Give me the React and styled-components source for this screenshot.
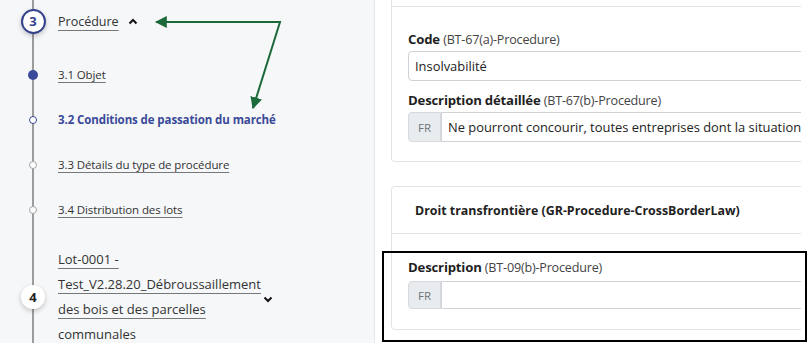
import React from 'react'
import styled, { createGlobalStyle } from 'styled-components'

const GlobalStyle = createGlobalStyle`
  html, body {
    margin: 0;
    padding: 0;
    background: #ffffff;
    font-family: "Open Sans", Lato, sans-serif;
    overflow: hidden;
  }
`

const Page = styled.div`
  display: flex;
  width: 807px;
  height: 343px;
  overflow: hidden;
  position: relative;
`

const Sidebar = styled.aside`
  position: relative;
  width: 374px;
  flex: none;
  background: #f6f7f9;
  border-right: 1px solid #e4e6ea;
`

const Timeline = styled.div`
  position: relative;
  display: flex;
  flex-direction: column;
  &::before {
    content: '';
    position: absolute;
    left: 32px;
    top: 0;
    bottom: -20px;
    width: 2px;
    background: #9c9c9c;
  }
`

const Row = styled.div`
  position: relative;
  display: grid;
  grid-template-columns: 58px 1fr;
  align-items: center;
  height: ${p => p.$h}px;
  margin-top: ${p => p.$mt || 0}px;
`

const Marker = styled.div`
  display: flex;
  justify-content: center;
  padding-left: 8px;
  width: 50px;
`

const StepCircle = styled.div`
  width: ${p => (p.$active ? 21 : 24)}px;
  height: ${p => (p.$active ? 21 : 24)}px;
  border-radius: 50%;
  background: #fff;
  border: ${p => (p.$active ? '2px solid #33428c' : 'none')};
  box-shadow: 0 2px 5px rgba(0, 0, 0, 0.22);
  display: flex;
  align-items: center;
  justify-content: center;
  font-size: 13px;
  font-weight: 700;
  color: ${p => (p.$active ? '#33428c' : '#222')};
`

const Dot = styled.div`
  width: ${p => (p.$filled ? 10 : 8)}px;
  height: ${p => (p.$filled ? 10 : 8)}px;
  border-radius: 50%;
  box-sizing: border-box;
  background: ${p => (p.$filled ? '#3a4a98' : '#fff')};
  border: ${p => (p.$filled ? 'none' : `1.5px solid ${p.$color}`)};
`

const StepLink = styled.span`
  display: inline-flex;
  align-items: center;
  gap: 9px;
  font-size: 12.5px;
  color: #333;
  span {
    text-decoration: underline;
    text-decoration-color: #777;
    text-underline-offset: 4px;
  }
`

const SubLink = styled.span`
  font-size: 11.5px;
  letter-spacing: -0.1px;
  color: ${p => (p.$current ? '#3a4a98' : '#333')};
  font-weight: ${p => (p.$current ? 700 : 400)};
  text-decoration: ${p => (p.$current ? 'none' : 'underline')};
  text-decoration-color: #777;
  text-underline-offset: 3px;
`

const LotBlock = styled.div`
  display: flex;
  align-items: center;
  gap: 1px;
`

const LotText = styled.span`
  width: 204px;
  font-size: 13px;
  line-height: 25px;
  color: #333;
  text-decoration: underline;
  text-decoration-color: #777;
  text-underline-offset: 4px;
`

const Arrow = styled.svg`
  position: absolute;
  left: 0;
  top: 0;
  pointer-events: none;
`

const Main = styled.main`
  flex: 1;
  padding-left: 16px;
  padding-right: 6px;
  overflow: hidden;
`

const Clip = styled.div`
  overflow: hidden;
`

const Card = styled.section`
  margin-right: -20px;
  margin-top: ${p => p.$mt || 0}px;
  border: 1px solid #e2e3e6;
  border-top: none;
  border-radius: 0 0 4px 4px;
  background: #fff;
  ${p => p.$top && 'border-top: 1px solid #e2e3e6; border-radius: 4px;'}
`

const CardCut = styled.div`
  height: 6px;
  border-bottom: 1px solid #e2e3e6;
`

const CardHeader = styled.div`
  height: 46px;
  display: flex;
  align-items: center;
  padding-left: 23px;
  border-bottom: 1px solid #e2e3e6;
  font-size: 12.4px;
  font-weight: 700;
  color: #222;
`

const CardBody = styled.div`
  padding: ${p => p.$pad};
  padding-left: 16px;
  display: flex;
  flex-direction: column;
`

const Label = styled.div`
  height: 16px;
  line-height: 16px;
  font-size: 13.2px;
  font-weight: 700;
  letter-spacing: -0.2px;
  color: #1f1f1f;
  margin-top: ${p => p.$mt || 0}px;
  margin-bottom: ${p => p.$mb || 4}px;
  small {
    font-size: 12.6px;
    font-weight: 400;
    color: #444;
  }
`

const Field = styled.div`
  display: flex;
  height: ${p => p.$h}px;
`

const Prefix = styled.div`
  width: 33px;
  flex: none;
  box-sizing: border-box;
  display: flex;
  align-items: center;
  justify-content: center;
  background: #e9ecef;
  border: 1px solid #d6d9dd;
  border-radius: 4px 0 0 4px;
  font-size: 11.5px;
  color: #6c757d;
`

const Input = styled.div`
  flex: 1;
  box-sizing: border-box;
  display: flex;
  align-items: center;
  padding-left: 6px;
  border: 1px solid #cfd2d6;
  border-radius: ${p => (p.$grouped ? '0 4px 4px 0' : '4px')};
  font-size: 12.9px;
  color: #222;
  white-space: nowrap;
  overflow: hidden;
`

const Highlight = styled.div`
  position: absolute;
  left: 382px;
  top: 251px;
  width: 421px;
  height: 87px;
  border: 2px solid #000;
  pointer-events: none;
`

const ChevronUp = () => (
  <svg width="10" height="7" viewBox="0 0 10 7">
    <path d="M1.5 5.5 L5 2 L8.5 5.5" fill="none" stroke="#111" strokeWidth="2" />
  </svg>
)

const ChevronDown = () => (
  <svg width="10" height="7" viewBox="0 0 10 7" style={{ marginTop: 4 }}>
    <path d="M1.5 1.5 L5 5 L8.5 1.5" fill="none" stroke="#111" strokeWidth="2" />
  </svg>
)

const subSteps = [
  { label: '3.1 Objet', filled: true, color: '#3a4a98' },
  { label: '3.2 Conditions de passation du marché', current: true, color: '#3a4a98' },
  { label: '3.3 Détails du type de procédure', color: '#a5a5a5' },
  { label: '3.4 Distribution des lots', color: '#a5a5a5' },
]

export default function App() {
  return (
    <>
      <GlobalStyle />
      <Page>
        <Sidebar>
          <Timeline>
            <Row $h={42}>
              <Marker><StepCircle $active>3</StepCircle></Marker>
              <StepLink><span>Procédure</span><ChevronUp /></StepLink>
            </Row>
            {subSteps.map((s, i) => (
              <Row key={s.label} $h={45} $mt={i === 0 ? 10 : 0}>
                <Marker><Dot $filled={s.filled} $color={s.color} /></Marker>
                <SubLink $current={s.current}>{s.label}</SubLink>
              </Row>
            ))}
            <Row $h={100} $mt={15}>
              <Marker><StepCircle>4</StepCircle></Marker>
              <LotBlock>
                <LotText>Lot-0001 - Test_V2.28.20_Débroussaillement des bois et des parcelles communales</LotText>
                <ChevronDown />
              </LotBlock>
            </Row>
          </Timeline>
          <Arrow width="374" height="343" viewBox="0 0 374 343">
            <defs>
              <marker id="head" viewBox="0 0 10 10" refX="9" refY="5" markerWidth="6" markerHeight="6" orient="auto-start-reverse">
                <path d="M0 0 L10 5 L0 10 z" fill="#1c6a3a" />
              </marker>
            </defs>
            <path d="M156 22 L280 22 L253 108" fill="none" stroke="#1c6a3a" strokeWidth="2" markerStart="url(#head)" markerEnd="url(#head)" />
          </Arrow>
        </Sidebar>
        <Main>
          <Clip>
            <Card>
              <CardCut />
              <CardBody $pad="24px 0 19px">
                <Label>Code <small>(BT-67(a)-Procedure)</small></Label>
                <Field $h={30}>
                  <Input>Insolvabilité</Input>
                </Field>
                <Label $mt={11}>Description détaillée <small>(BT-67(b)-Procedure)</small></Label>
                <Field $h={30}>
                  <Prefix>FR</Prefix>
                  <Input $grouped>Ne pourront concourir, toutes entreprises dont la situation</Input>
                </Field>
              </CardBody>
            </Card>
            <Card $top $mt={24}>
              <CardHeader>Droit transfrontière (GR-Procedure-CrossBorderLaw)</CardHeader>
              <CardBody $pad="25px 0 20px">
                <Label $mb={6}>Description <small>(BT-09(b)-Procedure)</small></Label>
                <Field $h={28}>
                  <Prefix>FR</Prefix>
                  <Input $grouped />
                </Field>
              </CardBody>
            </Card>
          </Clip>
        </Main>
        <Highlight />
      </Page>
    </>
  )
}
